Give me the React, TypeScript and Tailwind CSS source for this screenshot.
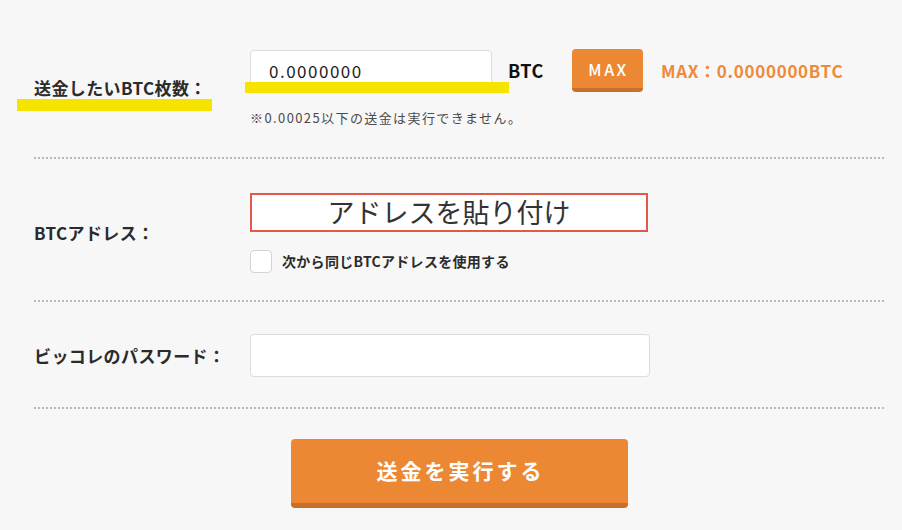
import React from "react";

const font = { fontFamily: '"Noto Sans CJK JP", "Noto Sans", sans-serif' };

function Sep() {
  return <div className="h-0 border-t-2 border-dotted border-[#b9b9b9]" />;
}

export default function App() {
  return (
    <div className="w-[902px] h-[530px] bg-[#f7f7f7] overflow-hidden" style={font}>
      <div className="ml-[34px] w-[850px]">
        {/* Row 1 */}
        <div className="flex items-center pt-[49px] pb-[30px]">
          <div className="w-[216px] shrink-0">
            <div className="relative inline-block">
              <span className="text-[17px] leading-[24px] font-bold tracking-[0.4px] text-[#2b2b2b]">送金したいBTC枚数：</span>
              <div className="absolute left-[-17px] top-[23px] w-[195px] h-[12px] bg-[#f7e300]" />
            </div>
          </div>
          <div className="flex flex-col">
            <div className="flex items-center h-[43px]">
              <div className="relative">
                <input
                  readOnly
                  value="0.0000000"
                  className="block w-[242px] h-[42px] bg-white border border-[#dcdcdc] rounded-[4px] pl-[18px] text-[17px] tracking-[1.5px] text-[#222] outline-none"
                  style={font}
                />
                <div className="absolute left-[-5px] top-[32px] w-[264px] h-[11px] bg-[#f7e300] z-10" />
              </div>
              <span className="ml-[16px] text-[18px] font-bold tracking-[0.6px] text-[#111]">BTC</span>
              <button className="ml-[28px] w-[71px] h-[43px] rounded-[4px] bg-[#ec8834] border-b-[4px] border-[#c96f2b] text-white text-[16px] font-medium tracking-[2.5px] pl-[2px] flex items-center justify-center">
                MAX
              </button>
              <span className="ml-[18px] text-[17px] font-bold text-[#ee8a3a] tracking-[0.7px]">MAX：0.0000000BTC</span>
            </div>
            <div className="mt-[17px] text-[13px] leading-[18px] tracking-[1.4px] text-[#4a4a4a]">
              ※0.00025以下の送金は実行できません。
            </div>
          </div>
        </div>
        <Sep />

        {/* Row 2 */}
        <div className="flex items-center pt-[34px] pb-[27px]">
          <div className="w-[216px] shrink-0 text-[17px] leading-[24px] font-bold tracking-[0.4px] text-[#2b2b2b]">BTCアドレス：</div>
          <div className="flex flex-col">
            <input
              readOnly
              value="アドレスを貼り付け"
              className="block w-[398px] h-[39px] bg-white border-2 border-[#e2594a] text-center text-[27px] text-[#333] outline-none"
              style={font}
            />
            <label className="mt-[18px] flex items-center">
              <span className="w-[22px] h-[23px] bg-white border border-[#d4d4d4] rounded-[4px]" />
              <span className="ml-[10px] text-[14px] font-bold tracking-[0.3px] text-[#2b2b2b]">次から同じBTCアドレスを使用する</span>
            </label>
          </div>
        </div>
        <Sep />

        {/* Row 3 */}
        <div className="flex items-center pt-[32px] pb-[30px]">
          <div className="w-[216px] shrink-0 text-[17px] leading-[24px] font-bold tracking-[0.4px] text-[#2b2b2b]">ビッコレのパスワード：</div>
          <input
            type="password"
            className="block w-[400px] h-[43px] bg-white border border-[#dcdcdc] rounded-[4px] outline-none"
          />
        </div>
        <Sep />

        <div className="flex justify-center pt-[30px]">
          <button className="w-[337px] h-[69px] rounded-[4px] bg-[#ec8834] border-b-[5px] border-[#c96f2b] text-white text-[21px] font-bold tracking-[3px] pl-[3px] flex items-center justify-center">
            送金を実行する
          </button>
        </div>
      </div>
    </div>
  );
}
